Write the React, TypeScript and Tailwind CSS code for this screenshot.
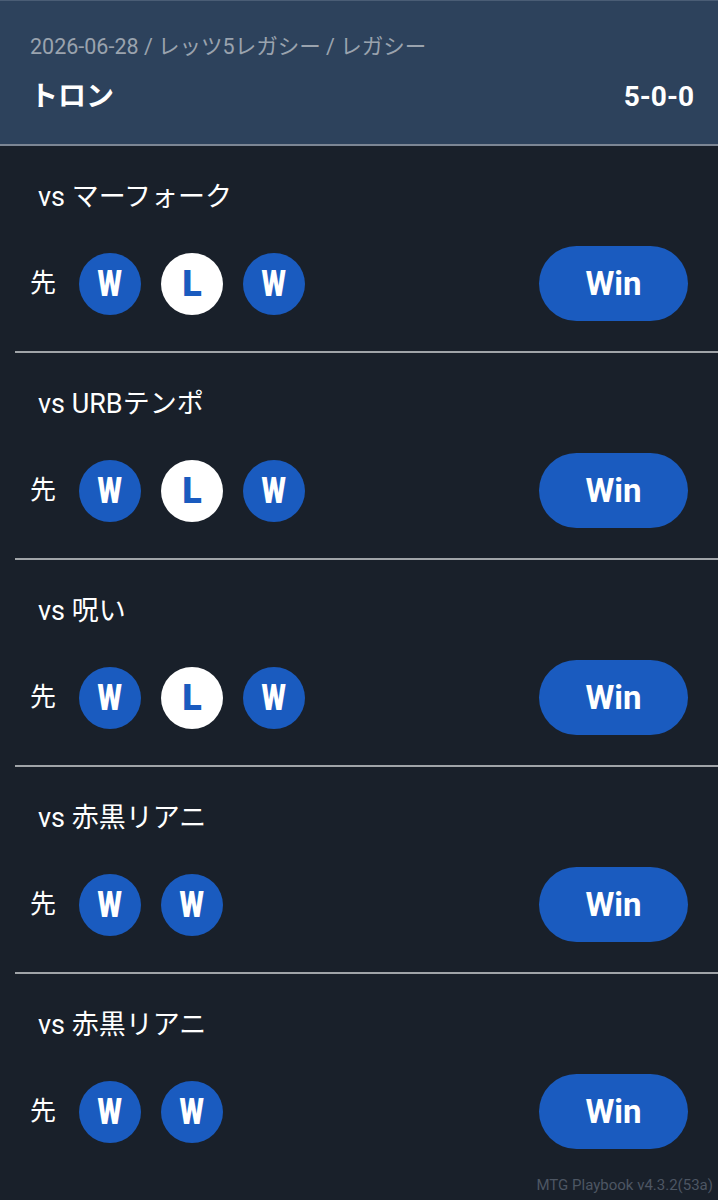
const matches = [
  { opp: "マーフォーク", games: ["W", "L", "W"] },
  { opp: "URBテンポ", games: ["W", "L", "W"] },
  { opp: "呪い", games: ["W", "L", "W"] },
  { opp: "赤黒リアニ", games: ["W", "W"] },
  { opp: "赤黒リアニ", games: ["W", "W"] },
];

const font = "font-['Roboto','Noto_Sans_CJK_JP',sans-serif]";

function GameBadge({ result }: { result: string }) {
  const win = result === "W";
  return (
    <div
      className={`flex h-[62px] w-[62px] items-center justify-center rounded-full text-[36px] font-black leading-none ${
        win ? "bg-[#1a5bbf] text-white" : "bg-white text-[#1a5bbf]"
      }`}
    >
      <span className={win ? "inline-block scale-x-[0.78]" : ""}>{result}</span>
    </div>
  );
}

function MatchRow({ opp, games, last }: { opp: string; games: string[]; last: boolean }) {
  return (
    <div className={`ml-[15px] flex h-[207px] flex-col ${last ? "" : "border-b-2 border-[#a0a4a8]"}`}>
      <div className="pl-[23px] pt-[35px] text-[27px] leading-[32px] text-white">vs {opp}</div>
      <div className="mt-[33px] flex items-center">
        <span className="w-[64px] pl-[15px] text-[26px] text-white">先</span>
        <div className="flex gap-[20px]">
          {games.map((g, i) => (
            <GameBadge key={i} result={g} />
          ))}
        </div>
        <button className="ml-auto mr-[30px] h-[75px] w-[149px] rounded-full bg-[#1a5bbf] text-[33px] font-bold text-white">
          Win
        </button>
      </div>
    </div>
  );
}

export default function App() {
  return (
    <div className={`relative h-[1200px] w-[718px] overflow-hidden bg-[#19202a] ${font}`}>
      <header className="h-[146px] border-t border-[#4a5d75] border-b-2 border-b-[#7c8694] bg-[#2d425c] px-[30px] pt-[31px]">
        <div className="text-[21.5px] leading-[30px] text-[#9aa3ae]">2026-06-28 / レッツ5レガシー / レガシー</div>
        <div className="mt-[17px] flex items-center justify-between text-[28px] font-bold leading-[36px] text-white">
          <span>トロン</span>
          <span className="-mr-[6px]">5-0-0</span>
        </div>
      </header>
      <main>
        {matches.map((m, i) => (
          <MatchRow key={i} opp={m.opp} games={m.games} last={i === matches.length - 1} />
        ))}
      </main>
      <div className="absolute bottom-[4px] right-[5px] text-[15px] text-[#4d5663]">MTG Playbook v4.3.2(53a)</div>
    </div>
  );
}
